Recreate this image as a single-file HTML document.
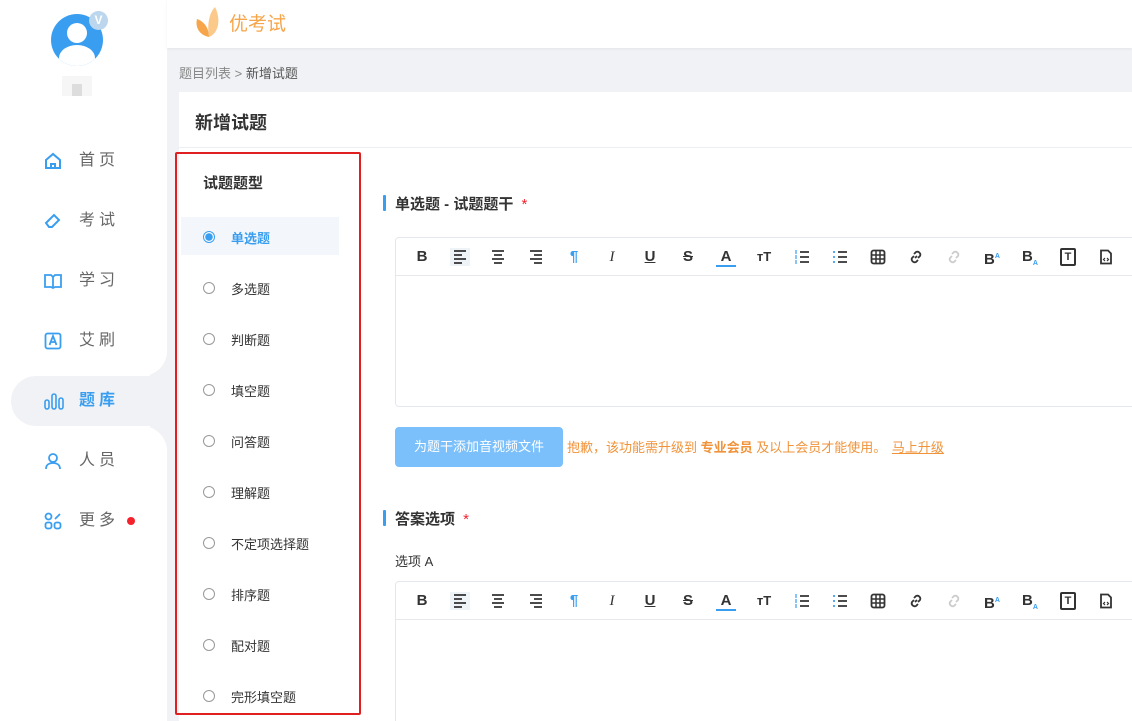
<!DOCTYPE html>
<html><head><meta charset="utf-8"><style>
*{margin:0;padding:0;box-sizing:border-box}
html,body{width:1132px;height:721px;overflow:hidden}
body{background:#f0f2f5;font-family:"Liberation Sans","Noto Sans CJK SC",sans-serif;position:relative;color:#333}
.a{position:absolute}
.side{left:0;top:0;width:167px;height:721px;background:#fff}
.nav{left:44px;width:120px;height:20px;font-size:16px;color:#666;letter-spacing:4px;line-height:20px}
.nav svg{position:absolute;left:0;top:1px}
.nav span{position:absolute;left:35px}
.tb{position:absolute;top:0;height:38px;left:0;right:0;border-bottom:1px solid #e6e8eb}
.tb i{position:absolute;top:10px;width:20px;height:18px;text-align:center;font-style:normal;font-size:15px;font-weight:bold;color:#333;line-height:18px}
.tb i svg{display:block;margin:1px auto 0}
.rad{position:absolute;left:203px;width:12px;height:12px;border:1px solid #999;border-radius:50%}
.it{position:absolute;left:231px;font-size:13px;color:#333}
</style></head><body>
<div class="a side"></div>
<div class="a" style="left:51px;top:14px;width:52px;height:52px;border-radius:50%;background:#3a9ef0;overflow:hidden">
<div style="position:absolute;left:16px;top:9px;width:20px;height:20px;border-radius:50%;background:#fff"></div>
<div style="position:absolute;left:8px;top:31px;width:36px;height:26px;border-radius:50%;background:#fff"></div></div>
<div class="a" style="left:89px;top:11px;width:19px;height:19px;border-radius:50%;background:#bcd6ee;color:#fff;font-size:12px;font-weight:bold;text-align:center;line-height:19px">V</div>
<div class="a" style="left:62px;top:76px;width:30px;height:20px;background:#f6f6f6"></div>
<div class="a" style="left:72px;top:84px;width:10px;height:12px;background:#ddd"></div>
<div class="a" style="left:11px;top:376px;width:170px;height:50px;background:#f0f2f5;border-radius:25px 0 0 25px"></div>
<div class="a" style="left:150px;top:346px;width:17px;height:30px;background:#f0f2f5"></div>
<div class="a" style="left:130px;top:346px;width:37px;height:30px;background:#fff;border-radius:0 0 25px 0"></div>
<div class="a" style="left:150px;top:426px;width:17px;height:30px;background:#f0f2f5"></div>
<div class="a" style="left:130px;top:426px;width:37px;height:30px;background:#fff;border-radius:0 25px 0 0"></div>
<div class="a nav" style="top:151px"><svg width="18" height="18" viewBox="0 0 18 18" fill="none" stroke="#3a9ef0" stroke-width="2"><path d="M2 8L9 2l7 6v8H2z"/><path d="M7 16v-4h4v4"/></svg><span>首页</span></div>
<div class="a nav" style="top:211px"><svg width="18" height="18" viewBox="0 0 18 18" fill="none" stroke="#3a9ef0" stroke-width="2"><path d="M2 11l8-8 5 5-7 7H5z"/></svg><span>考试</span></div>
<div class="a nav" style="top:271px"><svg width="18" height="18" viewBox="0 0 18 18" fill="none" stroke="#3a9ef0" stroke-width="1.8"><path d="M1 3h6l2 2 2-2h6v12h-6l-2 1-2-1H1zM9 5v11"/></svg><span>学习</span></div>
<div class="a nav" style="top:331px"><svg width="18" height="18" viewBox="0 0 18 18" fill="none" stroke="#3a9ef0" stroke-width="1.8"><rect x="1.5" y="1.5" width="15" height="15" rx="2"/><path d="M5.5 13l3.5-9 3.5 9M7 10h4"/></svg><span>艾刷</span></div>
<div class="a nav" style="top:391px;color:#3a9ef0;font-weight:bold"><svg width="20" height="18" viewBox="0 0 20 18" fill="none" stroke="#3a9ef0" stroke-width="1.6"><rect x="1" y="8" width="4" height="9" rx="2"/><rect x="8" y="2" width="4" height="15" rx="2"/><rect x="15" y="6" width="4" height="11" rx="2"/></svg><span>题库</span></div>
<div class="a nav" style="top:451px"><svg width="18" height="18" viewBox="0 0 18 18" fill="none" stroke="#3a9ef0" stroke-width="1.8"><circle cx="9" cy="6" r="4"/><path d="M2 17c0-4 3-6 7-6s7 2 7 6"/></svg><span>人员</span></div>
<div class="a nav" style="top:511px"><svg width="18" height="18" viewBox="0 0 18 18" fill="none" stroke="#3a9ef0" stroke-width="1.8"><rect x="1.5" y="1.5" width="6" height="6" rx="3"/><rect x="1.5" y="10.5" width="6" height="6" rx="2"/><rect x="10.5" y="10.5" width="6" height="6" rx="2"/><path d="M11 7l5-5"/></svg><span>更多</span></div>
<div class="a" style="left:127px;top:517px;width:8px;height:8px;border-radius:50%;background:#f5222d"></div>
<div class="a" style="left:167px;top:0;width:965px;height:48px;background:#fff;box-shadow:0 1px 3px rgba(0,0,0,.06)"></div>
<svg class="a" style="left:195px;top:5px" width="28" height="32" viewBox="0 0 28 32"><path d="M14 32C4 30 0 22 2 14c6 2 12 8 12 18z" fill="#f7a54a"/><path d="M14 32C24 28 26 14 20 2c-6 6-8 18-6 30z" fill="#fbc98a"/></svg>
<div class="a" style="left:229px;top:9px;font-size:19px;color:#f7a54a">优考试</div>
<div class="a" style="left:179px;top:63px;font-size:13px;color:#888">题目列表 &gt; <span style="color:#555">新增试题</span></div>
<div class="a" style="left:179px;top:92px;width:953px;height:629px;background:#fff"></div>
<div class="a" style="left:195px;top:109px;font-size:18px;font-weight:bold;color:#333">新增试题</div>
<div class="a" style="left:179px;top:147px;width:953px;height:1px;background:#ebeef5"></div>
<div class="a" style="left:175px;top:152px;width:186px;height:563px;border:2px solid #e02020;border-radius:2px"></div>
<div class="a" style="left:203px;top:172px;font-size:15px;font-weight:bold;color:#333">试题题型</div>
<div class="a" style="left:181px;top:217px;width:158px;height:38px;background:#f3f7fb"></div>
<div class="a" style="left:203px;top:231px;width:12px;height:12px;border-radius:50%;border:1px solid #3a9ef0;background:radial-gradient(#3a9ef0 0 3.5px,#fff 4px)"></div>
<div class="it" style="top:228px;color:#3a9ef0;font-weight:bold">单选题</div>
<div class="rad" style="top:282px"></div><div class="it" style="top:279px">多选题</div>
<div class="rad" style="top:333px"></div><div class="it" style="top:330px">判断题</div>
<div class="rad" style="top:384px"></div><div class="it" style="top:381px">填空题</div>
<div class="rad" style="top:435px"></div><div class="it" style="top:432px">问答题</div>
<div class="rad" style="top:486px"></div><div class="it" style="top:483px">理解题</div>
<div class="rad" style="top:537px"></div><div class="it" style="top:534px">不定项选择题</div>
<div class="rad" style="top:588px"></div><div class="it" style="top:585px">排序题</div>
<div class="rad" style="top:639px"></div><div class="it" style="top:636px">配对题</div>
<div class="rad" style="top:690px"></div><div class="it" style="top:687px">完形填空题</div>
<div class="a" style="left:383px;top:195px;width:3px;height:16px;background:#3a9ef0;border-radius:1px"></div>
<div class="a" style="left:395px;top:193px;font-size:15px;font-weight:bold;color:#333">单选题 - 试题题干 <span style="color:#f5222d;font-weight:normal;margin-left:4px">*</span></div>
<div class="a" id="e1" style="left:395px;top:237px;width:750px;height:170px;border:1px solid #e4e7ed;border-radius:4px"></div>
<div class="a" style="left:395px;top:427px;width:168px;height:40px;background:#7cc0fb;border-radius:4px;color:#fff;font-size:13px;text-align:center;line-height:40px">为题干添加音视频文件</div>
<div class="a" style="left:567px;top:437px;font-size:13px;color:#f0933a">抱歉，该功能需升级到 <b>专业会员</b> 及以上会员才能使用。 <u style="margin-left:2px">马上升级</u></div>
<div class="a" style="left:383px;top:510px;width:3px;height:16px;background:#3a9ef0;border-radius:1px"></div>
<div class="a" style="left:395px;top:508px;font-size:15px;font-weight:bold;color:#333">答案选项 <span style="color:#f5222d;font-weight:normal;margin-left:4px">*</span></div>
<div class="a" style="left:395px;top:551px;font-size:13px;color:#333">选项 A</div>
<div class="a" id="e2" style="left:395px;top:581px;width:750px;height:150px;border:1px solid #e4e7ed;border-radius:4px"></div>
<script>
function sv(d,c){return '<svg width="16" height="16" viewBox="0 0 16 16" fill="none" stroke="'+(c||'#333')+'" stroke-width="1.8">'+d+'</svg>';}
var AL=sv('<path d="M2 2h12M2 6h8M2 10h12M2 14h8"/>'),AC=sv('<path d="M2 2h12M4 6h8M2 10h12M4 14h8"/>'),AR=sv('<path d="M2 2h12M6 6h8M2 10h12M6 14h8"/>');
var OL=sv('<path d="M6 3h9M6 8h9M6 13h9"/><path d="M2 1v4M2 6v4M2 11v4" stroke="#3a9ef0" stroke-width="1.2"/>');
var UL=sv('<path d="M6 3h9M6 8h9M6 13h9"/><path d="M1 3h2M1 8h2M1 13h2" stroke="#3a9ef0"/>');
var TB=sv('<rect x="1.5" y="1.5" width="13" height="13" rx="2"/><path d="M1.5 6h13M1.5 10h13M6 1.5v13M10 1.5v13" stroke-width="1.5"/>');
var LK=sv('<path d="M7 9l2-2"/><path d="M6 5l2-2a3 3 0 0 1 4 4l-2 2M10 11l-2 2a3 3 0 0 1-4-4l2-2"/>');
var LK2=sv('<path d="M6 5l2-2a3 3 0 0 1 4 4l-2 2M10 11l-2 2a3 3 0 0 1-4-4l2-2"/>','#ccc');
var DC=sv('<path d="M3 1.5h7l3 3v10H3z"/><path d="M7 9l-1.5 1.5L7 12M9 9l1.5 1.5L9 12" stroke-width="1.2"/>');
var ic=['B',AL,AC,AR,'¶','I','U','S','A','тT',OL,UL,TB,LK,LK2,'B','B','T',DC];
['e1','e2'].forEach(function(id){var e=document.getElementById(id);var t=document.createElement('div');t.className='tb';
ic.forEach(function(c,i){var s=document.createElement('i');s.innerHTML=c;s.style.left=(16+i*38)+'px';
if(i==1){s.style.background='#eef3f8';}
if(i==4)s.style.color='#3a9ef0';
if(i==5)s.style.fontFamily='"Liberation Serif",serif',s.style.fontWeight='normal',s.style.fontStyle='italic';
if(i==6)s.style.textDecoration='underline';
if(i==7)s.style.textDecoration='line-through';
if(i==8)s.style.borderBottom='2px solid #3a9ef0',s.style.height='19px';
if(i==9)s.style.fontSize='13px';
if(i==17)s.style.border='2px solid #333',s.style.fontSize='11px',s.style.lineHeight='14px',s.style.width='16px',s.style.left=(18+i*38)+'px',s.style.borderRadius='2px';
if(i==15)s.innerHTML='B<sup style="font-size:7px;color:#3a9ef0">A</sup>';
if(i==16)s.innerHTML='B<sub style="font-size:7px;color:#3a9ef0">A</sub>';
t.appendChild(s);});e.appendChild(t);});
</script>
</body></html>
